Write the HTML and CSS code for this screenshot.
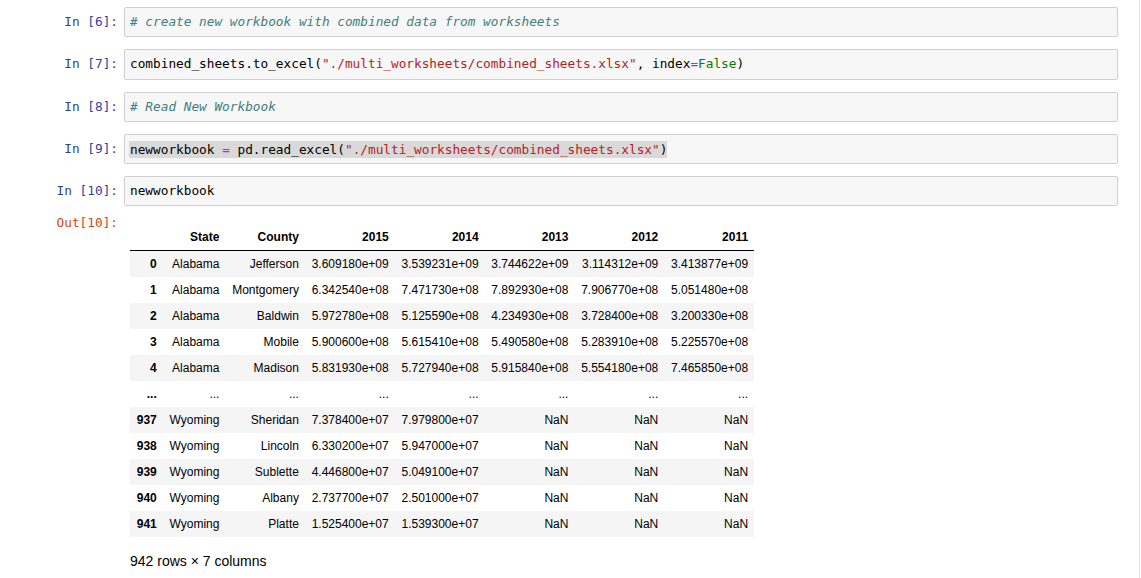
FILE: index.html
```html
<!DOCTYPE html>
<html>
<head>
<meta charset="utf-8">
<link rel="stylesheet" href="styles.css">
</head>
<body>
<div class="notebook">
  <div class="cell">
    <div class="prompt in">In&nbsp;[6]:</div>
    <div class="input"><span class="cm-comment"># create new workbook with combined data from worksheets</span></div>
  </div>
  <div class="cell">
    <div class="prompt in">In&nbsp;[7]:</div>
    <div class="input">combined_sheets.to_excel(<span class="cm-string">"./multi_worksheets/combined_sheets.xlsx"</span>, index<span class="cm-op">=</span><span class="cm-kw">False</span>)</div>
  </div>
  <div class="cell">
    <div class="prompt in">In&nbsp;[8]:</div>
    <div class="input"><span class="cm-comment"># Read New Workbook</span></div>
  </div>
  <div class="cell">
    <div class="prompt in">In&nbsp;[9]:</div>
    <div class="input"><span class="sel">newworkbook <span class="cm-op">=</span> pd.read_excel(<span class="cm-string">"./multi_worksheets/combined_sheets.xlsx"</span>)</span></div>
  </div>
  <div class="cell">
    <div class="prompt in">In&nbsp;[10]:</div>
    <div class="input">newworkbook</div>
  </div>
  <div class="output">
    <div class="prompt out">Out[10]:</div>
    <div class="output-body">
      <table class="df">
        <thead>
          <tr><th></th><th>State</th><th>County</th><th>2015</th><th>2014</th><th>2013</th><th>2012</th><th>2011</th></tr>
        </thead>
        <tbody>
          <tr><th>0</th><td>Alabama</td><td>Jefferson</td><td>3.609180e+09</td><td>3.539231e+09</td><td>3.744622e+09</td><td>3.114312e+09</td><td>3.413877e+09</td></tr>
          <tr><th>1</th><td>Alabama</td><td>Montgomery</td><td>6.342540e+08</td><td>7.471730e+08</td><td>7.892930e+08</td><td>7.906770e+08</td><td>5.051480e+08</td></tr>
          <tr><th>2</th><td>Alabama</td><td>Baldwin</td><td>5.972780e+08</td><td>5.125590e+08</td><td>4.234930e+08</td><td>3.728400e+08</td><td>3.200330e+08</td></tr>
          <tr><th>3</th><td>Alabama</td><td>Mobile</td><td>5.900600e+08</td><td>5.615410e+08</td><td>5.490580e+08</td><td>5.283910e+08</td><td>5.225570e+08</td></tr>
          <tr><th>4</th><td>Alabama</td><td>Madison</td><td>5.831930e+08</td><td>5.727940e+08</td><td>5.915840e+08</td><td>5.554180e+08</td><td>7.465850e+08</td></tr>
          <tr><th>...</th><td>...</td><td>...</td><td>...</td><td>...</td><td>...</td><td>...</td><td>...</td></tr>
          <tr><th>937</th><td>Wyoming</td><td>Sheridan</td><td>7.378400e+07</td><td>7.979800e+07</td><td>NaN</td><td>NaN</td><td>NaN</td></tr>
          <tr><th>938</th><td>Wyoming</td><td>Lincoln</td><td>6.330200e+07</td><td>5.947000e+07</td><td>NaN</td><td>NaN</td><td>NaN</td></tr>
          <tr><th>939</th><td>Wyoming</td><td>Sublette</td><td>4.446800e+07</td><td>5.049100e+07</td><td>NaN</td><td>NaN</td><td>NaN</td></tr>
          <tr><th>940</th><td>Wyoming</td><td>Albany</td><td>2.737700e+07</td><td>2.501000e+07</td><td>NaN</td><td>NaN</td><td>NaN</td></tr>
          <tr><th>941</th><td>Wyoming</td><td>Platte</td><td>1.525400e+07</td><td>1.539300e+07</td><td>NaN</td><td>NaN</td><td>NaN</td></tr>
        </tbody>
      </table>
      <p class="shape">942 rows × 7 columns</p>
    </div>
  </div>
</div>
</body>
</html>
```

FILE: styles.css
```css
html, body {
  margin: 0;
  padding: 0;
  background: #ffffff;
}

.notebook {
  width: 1140px;
  min-height: 578px;
  box-sizing: border-box;
  border-right: 1px solid #e2e2e2;
  padding-top: 7px;
  font-family: "DejaVu Sans Mono", "Liberation Mono", monospace;
  font-size: 12.75px;
  color: #000;
}

.cell {
  display: flex;
  align-items: flex-start;
  margin-right: 21px;
  margin-bottom: 12px;
}

.prompt {
  width: 124px;
  flex: none;
  box-sizing: border-box;
  padding-right: 6px;
  text-align: right;
  line-height: 18.25px;
  white-space: nowrap;
}

.cell .prompt {
  padding-top: 6px;
}

.prompt.in {
  color: #303f9f;
}

.prompt.out {
  color: #d84315;
  padding-top: 3px;
}

.input {
  flex: 1;
  background: #f7f7f7;
  border: 1px solid #cfcfcf;
  border-radius: 2px;
  padding: 5px 5px;
  line-height: 18.25px;
  white-space: pre;
}

.cm-comment {
  color: #408080;
  font-style: italic;
}

.cm-string {
  color: #ba2121;
}

.cm-op {
  color: #aa22ff;
}

.cm-kw {
  color: #008000;
}

.sel {
  display: inline-block;
  background: #d9d9d9;
  line-height: 17px;
  margin-left: -1px;
  padding-left: 1px;
  vertical-align: top;
  margin-top: 1px;
}

.output {
  display: flex;
  align-items: flex-start;
  margin-top: -7px;
}

.output-body {
  padding-top: 13px;
  padding-left: 6px;
  font-family: "Liberation Sans", Arial, sans-serif;
}

.df {
  border-collapse: collapse;
  border-spacing: 0;
  font-size: 12px;
  color: #000;
}

.df th, .df td {
  text-align: right;
  vertical-align: middle;
  padding: 6px 6px 6px 6.75px;
  line-height: 14px;
  white-space: nowrap;
  font-weight: normal;
}

.df th {
  font-weight: bold;
}

.df thead {
  border-bottom: 1px solid #000;
}

.df tbody tr:nth-child(odd) {
  background: #f5f5f5;
}

.shape {
  margin: 14px 0 0 0;
  font-size: 14px;
  line-height: 20px;
  color: #000;
}
```
